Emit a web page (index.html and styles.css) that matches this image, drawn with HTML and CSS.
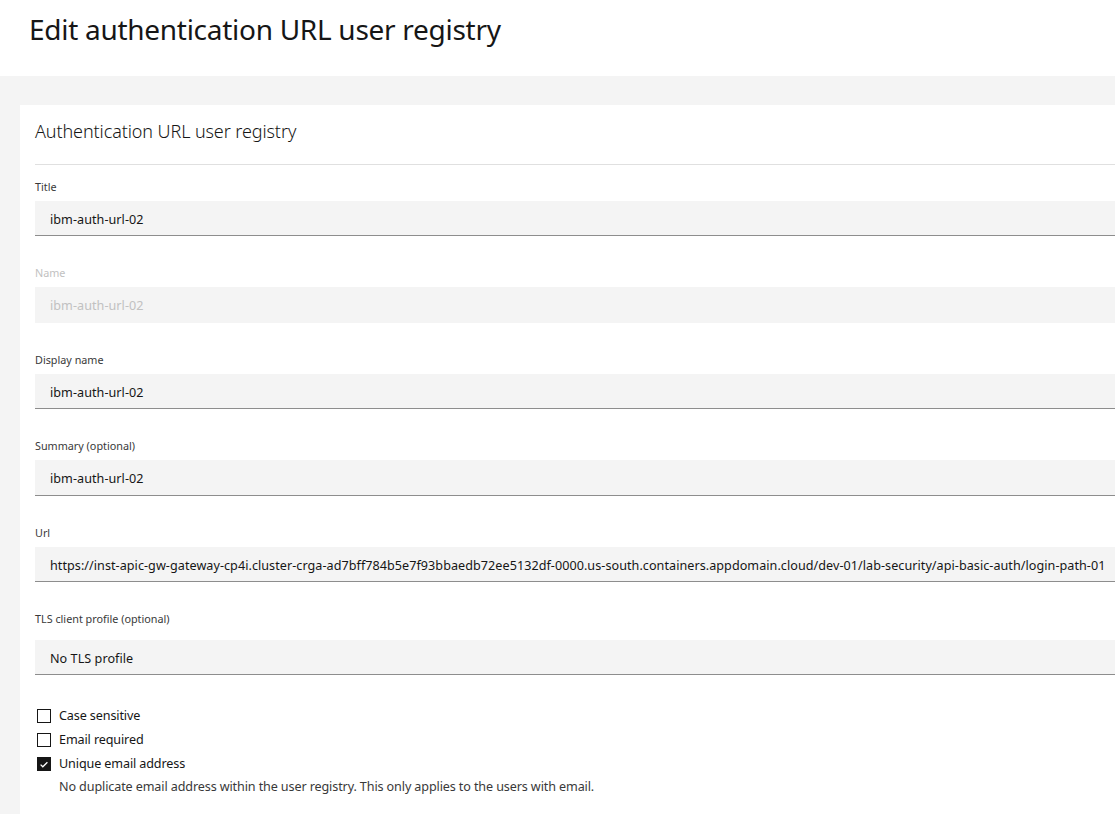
FILE: index.html
```html
<!DOCTYPE html>
<html lang="en">
<head>
<meta charset="utf-8">
<title>Edit authentication URL user registry</title>
<link rel="stylesheet" href="styles.css">
</head>
<body>
<header class="page-header">
  <h1 class="page-title">Edit authentication URL user registry</h1>
</header>
<main class="content">
  <section class="card">
    <h2 class="card-title">Authentication URL user registry</h2>
    <div class="card-body">
      <div class="field">
        <div class="field-label">Title</div>
        <div class="field-input">ibm-auth-url-02</div>
      </div>
      <div class="field field--disabled">
        <div class="field-label">Name</div>
        <div class="field-input">ibm-auth-url-02</div>
      </div>
      <div class="field">
        <div class="field-label">Display name</div>
        <div class="field-input">ibm-auth-url-02</div>
      </div>
      <div class="field">
        <div class="field-label">Summary (optional)</div>
        <div class="field-input">ibm-auth-url-02</div>
      </div>
      <div class="field">
        <div class="field-label">Url</div>
        <div class="field-input">https://inst-apic-gw-gateway-cp4i.cluster-crga-ad7bff784b5e7f93bbaedb72ee5132df-0000.us-south.containers.appdomain.cloud/dev-01/lab-security/api-basic-auth/login-path-01</div>
      </div>
      <div class="field field--select">
        <div class="field-label">TLS client profile (optional)</div>
        <div class="field-input">No TLS profile</div>
      </div>
      <div class="checks">
        <div class="check">
          <span class="check-box"></span>
          <span class="check-label">Case sensitive</span>
        </div>
        <div class="check">
          <span class="check-box"></span>
          <span class="check-label">Email required</span>
        </div>
        <div class="check">
          <span class="check-box check-box--on"><svg viewBox="0 0 14 14" width="14" height="14"><path d="M3.6 7.6 L5.8 9.8 L10.4 5.2" fill="none" stroke="#fff" stroke-width="1.3"/></svg></span>
          <span class="check-label">Unique email address</span>
        </div>
        <div class="check-helper">No duplicate email address within the user registry. This only applies to the users with email.</div>
      </div>
    </div>
  </section>
</main>
</body>
</html>
```

FILE: styles.css
```css
* { box-sizing: border-box; }
html, body { margin: 0; padding: 0; }
body {
  font-family: "Noto Sans", "Liberation Sans", sans-serif;
  color: #161616;
  background: #f4f4f4;
  overflow: hidden;
  height: 814px;
}
.page-header {
  background: #fff;
  height: 76px;
  padding: 11px 0 0 29px;
}
.page-title {
  margin: 0;
  font-size: 28px;
  letter-spacing: -0.28px;
  line-height: 36px;
  font-weight: 400;
  color: #161616;
}
.content {
  background: #f4f4f4;
  padding: 29px 0 0 20px;
}
.card {
  background: #fff;
  padding: 0 0 40px 15px;
}
.card-title {
  margin: 0;
  height: 60px;
  padding-top: 14px;
  font-size: 18px;
  letter-spacing: -0.1px;
  line-height: 24px;
  font-weight: 300;
  color: #161616;
  border-bottom: 1px solid #e0e0e0;
}
.card-body {
  padding-top: 14px;
}
.field {
  margin-bottom: 29px;
}
.field-label {
  font-size: 10.8px;
  height: 15px;
  line-height: 15px;
  color: #393939;
  margin-bottom: 7px;
}
.field-input {
  height: 35.4px;
  background: #f4f4f4;
  border-bottom: 1px solid #8d8d8d;
  padding: 0 15px;
  font-size: 12.6px;
  letter-spacing: 0.05px;
  line-height: 37px;
  white-space: nowrap;
  overflow: hidden;
  color: #161616;
}
.field--disabled .field-label { color: #c1c1c1; }
.field--disabled .field-input { color: #c1c1c1; border-bottom-color: transparent; }
.field--select .field-label { margin-bottom: 14px; }
.field--select { margin-bottom: 28.6px; }
.checks {
  display: flex;
  flex-direction: column;
}
.check {
  display: flex;
  align-items: center;
  height: 24px;
}
.check-box {
  width: 14px;
  height: 14px;
  margin-left: 2px;
  margin-right: 8px;
  border: 1px solid #161616;
  background: #fff;
  flex: none;
  display: flex;
}
.check-box--on {
  background: #161616;
}
.check-box--on svg { margin: -1px; }
.check-label {
  font-size: 12.6px;
  letter-spacing: -0.12px;
  line-height: 16px;
  color: #161616;
}
.check-helper {
  font-size: 12.6px;
  letter-spacing: -0.12px;
  line-height: 16px;
  color: #393939;
  padding-left: 24px;
  margin-top: 3.5px;
}
```
